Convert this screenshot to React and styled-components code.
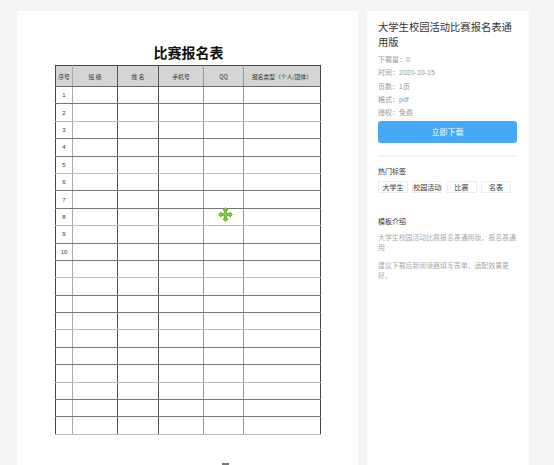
import { styled, createGlobalStyle } from "styled-components";

const GlobalStyle = createGlobalStyle`
  html, body {
    margin: 0;
    padding: 0;
    background: #f4f4f4;
    font-family: "Liberation Sans", "Noto Sans CJK SC", sans-serif;
    overflow: hidden;
  }
`;

const headers = ["序号", "班 级", "姓 名", "手机号", "QQ", "报名类型（个人/团体）"];
const widths = [17, 45, 41, 45, 40, 77];
const colLines = ["#aaa", "#555", "#555", "#999", "#999", "#444"];
const rows = Array.from({ length: 20 }, (_, i) => (i < 10 ? String(i + 1) : ""));
const tags = ["大学生", "校园活动", "比赛", "名表"];
const info = ["下载量：0", "时间：2020-10-15", "页数：1页", "格式：pdf", "授权：免费"];

export default function App() {
  return (
    <>
      <GlobalStyle />
      <Page>
        <Preview>
          <DocTitle>比赛报名表</DocTitle>
          <Table>
            <colgroup>
              {widths.map((w, i) => (
                <col key={i} style={{ width: w }} />
              ))}
            </colgroup>
            <thead>
              <tr>
                {headers.map((h, i) => (
                  <Th key={h} $line={colLines[i]}>
                    {h}
                  </Th>
                ))}
              </tr>
            </thead>
            <tbody>
              {rows.map((n, r) => (
                <tr key={r}>
                  {widths.map((_, i) => (
                    <Td key={i} $line={colLines[i]} $light={r % 3 === 1}>
                      {i === 0 ? n : ""}
                    </Td>
                  ))}
                </tr>
              ))}
            </tbody>
          </Table>
          <NextPageMark />
          <MoveCursor width="15" height="15" viewBox="0 0 15 15">
            <path
              d="M7.5 0.5 L10 3 L8.6 3 L8.6 6.4 L12 6.4 L12 5 L14.5 7.5 L12 10 L12 8.6 L8.6 8.6 L8.6 12 L10 12 L7.5 14.5 L5 12 L6.4 12 L6.4 8.6 L3 8.6 L3 10 L0.5 7.5 L3 5 L3 6.4 L6.4 6.4 L6.4 3 L5 3 Z"
              fill="#86cc3a"
              stroke="#5fa224"
              strokeWidth="0.8"
            />
          </MoveCursor>
        </Preview>
        <Side>
          <Title>大学生校园活动比赛报名表通用版</Title>
          <InfoList>
            {info.map((t) => (
              <InfoItem key={t}>{t}</InfoItem>
            ))}
          </InfoList>
          <DownloadButton type="button">立即下载</DownloadButton>
          <Divider />
          <SectionLabel>热门标签</SectionLabel>
          <Tags>
            {tags.map((t) => (
              <Tag key={t}>{t}</Tag>
            ))}
          </Tags>
          <SectionLabel $top={24}>模板介绍</SectionLabel>
          <Desc>大学生校园活动比赛报名表通用版，报名表通用</Desc>
          <Desc $top={8}>建议下载后新阅读器填写表单，适配效果更好。</Desc>
        </Side>
      </Page>
    </>
  );
}

const Page = styled.div`
  display: flex;
  gap: 9px;
  padding: 11px 0 0 17px;
  height: 465px;
  box-sizing: border-box;
`;

const Preview = styled.div`
  position: relative;
  width: 341px;
  background: #fff;
  padding-top: 32px;
  display: flex;
  flex-direction: column;
  align-items: flex-start;
`;

const DocTitle = styled.h1`
  margin: 0 0 4px;
  width: 100%;
  text-align: center;
  padding-left: 1px;
  font-size: 14px;
  line-height: 18px;
  font-weight: 700;
  color: #111;
  font-family: "Noto Sans CJK SC", sans-serif;
`;

const Table = styled.table`
  margin-left: 38px;
  width: 265px;
  table-layout: fixed;
  border-collapse: collapse;
  border: 1.5px solid #444;
`;

const Th = styled.th`
  height: 20px;
  padding: 0;
  background: #d4d4d4;
  border-right: 1px solid ${(p) => p.$line};
  border-bottom: 1px solid #666;
  font-size: 5.8px;
  font-weight: 400;
  color: #333;
  text-align: center;
  white-space: nowrap;
  font-family: "Noto Sans CJK SC", sans-serif;
`;

const Td = styled.td`
  height: 16.4px;
  padding: 0;
  border-right: 1px solid ${(p) => p.$line};
  border-bottom: 1px solid ${(p) => (p.$light ? "#bbb" : "#777")};
  font-size: 6px;
  font-weight: 400;
  color: #333;
  text-align: center;
`;

const NextPageMark = styled.div`
  margin: 28px 0 0 205px;
  width: 7px;
  height: 2px;
  background: #777;
`;

const MoveCursor = styled.svg`
  position: absolute;
  left: 200.5px;
  top: 195.5px;
`;

const Side = styled.div`
  width: 162px;
  box-sizing: border-box;
  background: #fff;
  padding: 9px 11px 0 11px;
  display: flex;
  flex-direction: column;
  align-items: flex-start;
`;

const Title = styled.h2`
  margin: 0;
  font-size: 10.3px;
  line-height: 15px;
  font-weight: 400;
  color: #333;
`;

const InfoList = styled.div`
  margin-top: 3px;
  display: flex;
  flex-direction: column;
`;

const InfoItem = styled.span`
  font-size: 7px;
  line-height: 13.3px;
  color: #999;
`;

const DownloadButton = styled.button`
  margin-top: 1.5px;
  width: 139px;
  height: 22px;
  border: none;
  border-radius: 3px;
  background: #45a9f8;
  color: #fff;
  font-size: 8px;
  font-family: "Noto Sans CJK SC", sans-serif;
  padding: 0;
`;

const Divider = styled.div`
  margin-top: 12px;
  width: 139px;
  height: 2px;
  background: #f2f2f2;
`;

const SectionLabel = styled.div`
  margin-top: ${(p) => p.$top ?? 10.5}px;
  font-size: 7px;
  line-height: 10px;
  color: #333;
`;

const Tags = styled.div`
  margin-top: 4px;
  display: flex;
  gap: 4.3px;
`;

const Tag = styled.span`
  width: 30px;
  height: 12px;
  box-sizing: border-box;
  border: 1px solid #ececec;
  display: flex;
  align-items: center;
  justify-content: center;
  font-size: 7px;
  color: #333;
  white-space: nowrap;
`;

const Desc = styled.p`
  margin: ${(p) => p.$top ?? 6}px 0 0;
  width: 140px;
  font-size: 6.9px;
  line-height: 10px;
  color: #aaa;
`;
